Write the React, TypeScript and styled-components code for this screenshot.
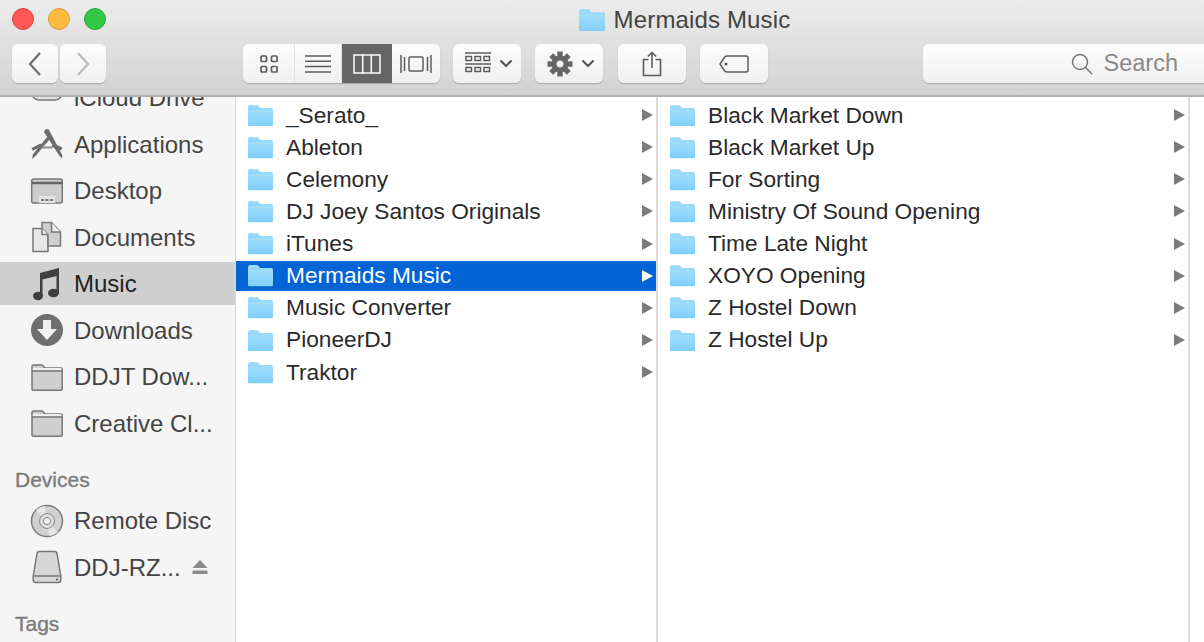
import React from "react";
import styled, { createGlobalStyle } from "styled-components";

const GlobalStyle = createGlobalStyle`
	html, body {
		margin: 0;
		padding: 0;
		background: #fff;
		overflow: hidden;
	}
	body {
		font-family: "Liberation Sans", Arial, sans-serif;
	}
`;

const FolderIcon = ({ size = 27 }: { size?: number }) => (
	<svg width={size} height={size * 0.85} viewBox="0 0 27 23">
		<defs>
			<linearGradient id="blueBack" x1="0" y1="0" x2="0" y2="1">
				<stop offset="0" stopColor="#a2dcfb" />
				<stop offset="1" stopColor="#6cc2f2" />
			</linearGradient>
			<linearGradient id="blueFront" x1="0" y1="0" x2="0" y2="1">
				<stop offset="0" stopColor="#a0dffd" />
				<stop offset="1" stopColor="#7fcff9" />
			</linearGradient>
		</defs>
		<path d="M1 3.500C1 2 1.800 1 3 1h6.500c1 0 1.600.4 2.200 1.200L13 4h11.500C25.600 4 26 4.800 26 6v14.500c0 1-.6 1.500-1.500 1.500h-22C1.600 22 1 21.500 1 20.500z" fill="url(#blueBack)" />
		<path d="M1 7.500C1 6.600 1.600 6 2.500 6h22c.9 0 1.500.6 1.500 1.500v13.500c0 .7-.6 1.200-1.500 1.200h-22C1.600 22.200 1 21.700 1 21z" fill="url(#blueFront)" />
	</svg>
);

const GreyFolder = () => (
	<svg width="34" height="30" viewBox="0 0 34 30">
		<path d="M2 4.500C2 3.500 2.600 3 3.500 3h8c.8 0 1.300.3 1.800 1l1.500 2H31c.7 0 1.200.5 1.200 1.200V27c0 .8-.5 1.300-1.200 1.300H3.200C2.500 28.300 2 27.800 2 27z" fill="#cfcfcf" stroke="#777" strokeWidth="1.500" />
		<path d="M2 9h30" stroke="#777" strokeWidth="1.500" />
		<path d="M2.800 7h28.600" stroke="#eee" strokeWidth="2" />
	</svg>
);

const AppsIcon = () => (
	<svg width="34" height="32" viewBox="0 0 34 32">
		<path d="M15 1.500l3.500-.5L32 26.500l.5 4-3-2.500L14 4z" fill="#6c6c6c" />
		<path d="M17.500 8.500l2 3L5.500 28 2 31l.8-4.500z" fill="#6c6c6c" />
		<path d="M1.500 20l9-4.500 1.500 2.800-9 4.500zM23 15.500l9.500 4-1.500 3-9.500-4z" fill="#6c6c6c" />
		<path d="M11.500 19.500h11" stroke="#8c8c8c" strokeWidth="2" />
	</svg>
);

const DesktopIcon = () => (
	<svg width="34" height="28" viewBox="0 0 34 28">
		<rect x="1.700" y="2" width="30.600" height="24" rx="2" fill="#cdcdcd" stroke="#777" strokeWidth="1.500" />
		<path d="M2 6h30" stroke="#666" strokeWidth="2.500" />
		<path d="M9 19h16v7H9z" fill="#e4e4e4" />
		<path d="M11 22h3v2h-3zM15.500 22h3v2h-3zM20 22h3v2h-3z" fill="#777" />
	</svg>
);

const DocumentsIcon = () => (
	<svg width="32" height="32" viewBox="0 0 32 32">
		<path d="M2 7.500h9l6 6v17H2z" fill="#e6e6e6" stroke="#777" strokeWidth="1.500" />
		<path d="M11 1.500h9.500l9 9.500v14H17V13.500l-6-6z" fill="#cfcfcf" stroke="#777" strokeWidth="1.500" />
		<path d="M20.500 1.500V11h9" fill="#eee" stroke="#777" strokeWidth="1.500" />
		<path d="M11 7.500v6h6" fill="#f2f2f2" stroke="#777" strokeWidth="1.500" />
	</svg>
);

const MusicIcon = () => (
	<svg width="30" height="34" viewBox="0 0 30 34">
		<path d="M8 6L27 1v25h-2.500V9L10.500 12.500V29H8z" fill="#3f3f3f" />
		<ellipse cx="6" cy="29" rx="5" ry="4.200" fill="#3f3f3f" />
		<ellipse cx="21.500" cy="26" rx="5.500" ry="4.200" fill="#3f3f3f" />
	</svg>
);

const DownloadsIcon = () => (
	<svg width="34" height="34" viewBox="0 0 34 34">
		<circle cx="17" cy="17" r="16" fill="#6f6f6f" />
		<path d="M13 7h8v9h6L17 27 7 16h6z" fill="#f1f1f1" />
	</svg>
);

const DiscIcon = () => (
	<svg width="34" height="34" viewBox="0 0 34 34">
		<circle cx="17" cy="17" r="15.500" fill="#d0d0d0" stroke="#7c7c7c" strokeWidth="1.500" />
		<path d="M17 17L6 6a15.500 15.500 0 0 1 9-4zM17 17l11 11a15.500 15.500 0 0 1-9 4z" fill="#e6e6e6" />
		<circle cx="17" cy="17" r="7.500" fill="#dedede" stroke="#8a8a8a" />
		<circle cx="17" cy="17" r="3.500" fill="#f5f5f5" stroke="#808080" />
	</svg>
);

const DriveIcon = () => (
	<svg width="30" height="34" viewBox="0 0 30 34">
		<path d="M5 3.500C5.200 2 6.200 1.500 7.500 1.500h15c1.300 0 2.300.5 2.500 2L28.800 26v4c0 1.500-1 2.500-2.500 2.500H3.700c-1.500 0-2.500-1-2.500-2.500v-4z" fill="#d6d6d6" stroke="#777" strokeWidth="1.500" />
		<path d="M1.500 26h27" stroke="#777" strokeWidth="1.500" />
		<circle cx="25" cy="29.500" r="1" fill="#555" />
	</svg>
);

const EjectIcon = () => (
	<svg width="16" height="16" viewBox="0 0 16 16">
		<path d="M8 1l7.500 8H.5z" fill="#8a8a8a" />
		<path d="M.5 11.500h15V15H.5z" fill="#8a8a8a" />
	</svg>
);

const IconCloud = () => (
	<svg width="34" height="32" viewBox="0 0 34 32">
		<rect x="2" y="-8" width="30" height="26" rx="7" fill="#e2e2e2" stroke="#777" strokeWidth="1.500" />
	</svg>
);

const BackIcon = ({ faded }: { faded?: boolean }) => (
	<svg width="14" height="26" viewBox="0 0 14 26">
		<path d={faded ? "M2 2l10 11L2 24" : "M12 2L2 13l10 11"} fill="none" stroke={faded ? "#b9b9b9" : "#6d6d6d"} strokeWidth="2.200" />
	</svg>
);

const GridIcon = () => (
	<svg width="18" height="18" viewBox="0 0 18 18" fill="none" stroke="#5c5c5c" strokeWidth="1.700">
		<rect x="1" y="1" width="5.500" height="5.500" rx="1" />
		<rect x="11.500" y="1" width="5.500" height="5.500" rx="1" />
		<rect x="1" y="11.500" width="5.500" height="5.500" rx="1" />
		<rect x="11.500" y="11.500" width="5.500" height="5.500" rx="1" />
	</svg>
);

const ListIcon = () => (
	<svg width="26" height="20" viewBox="0 0 26 20" stroke="#5c5c5c" strokeWidth="1.500">
		<path d="M0 2h26M0 7.300h26M0 12.600h26M0 18h26" />
	</svg>
);

const ColumnsIcon = () => (
	<svg width="28" height="20" viewBox="0 0 28 20" fill="none" stroke="#fff" strokeWidth="1.500">
		<rect x="1" y="1" width="26" height="18" fill="#666" />
		<path d="M9.700 1v18M18.300 1v18" strokeWidth="1.500" />
	</svg>
);

const CoverIcon = () => (
	<svg width="32" height="20" viewBox="0 0 32 20" fill="none" stroke="#5c5c5c" strokeWidth="1.500">
		<rect x="9" y="3" width="14" height="14" rx="1" />
		<path d="M1 1v18M4.500 3v14M27.500 3v14M31 1v18" />
	</svg>
);

const ArrangeIcon = () => (
	<svg width="26" height="24" viewBox="0 0 26 24" fill="none" stroke="#5c5c5c" strokeWidth="1.500">
		<path d="M0 1h26M0 12h26" />
		<rect x="1" y="4.500" width="5.500" height="4" />
		<rect x="10" y="4.500" width="5.500" height="4" />
		<rect x="19" y="4.500" width="5.500" height="4" />
		<rect x="1" y="15.500" width="5.500" height="4" />
		<rect x="10" y="15.500" width="5.500" height="4" />
		<rect x="19" y="15.500" width="5.500" height="4" />
	</svg>
);

const Chevron = () => (
	<svg width="14" height="9" viewBox="0 0 14 9">
		<path d="M1.500 1.500L7 7l5.500-5.500" fill="none" stroke="#555" strokeWidth="2.200" />
	</svg>
);

const GearIcon = () => (
	<svg width="26" height="26" viewBox="0 0 26 26">
		<g fill="#666">
			{[0, 45, 90, 135, 180, 225, 270, 315].map((angle) => (
				<rect key={angle} x="10.300" y="0.500" width="5.400" height="6" transform={`rotate(${angle} 13 13)`} />
			))}
		</g>
		<circle cx="13" cy="13" r="8.500" fill="#666" />
		<circle cx="13" cy="13" r="3.500" fill="#f2f2f2" />
	</svg>
);

const ShareIcon = () => (
	<svg width="20" height="26" viewBox="0 0 20 26" fill="none" stroke="#5c5c5c" strokeWidth="1.600">
		<path d="M6.500 8.500H1.500v16h17v-16h-5" />
		<path d="M10 17V1.500M5.800 5.500L10 1.500l4.200 4" />
	</svg>
);

const TagIcon = () => (
	<svg width="30" height="18" viewBox="0 0 30 18" fill="none" stroke="#5c5c5c" strokeWidth="1.500">
		<path d="M8 1h19c1.200 0 2 .8 2 2v12c0 1.200-.8 2-2 2H8c-1 0-1.600-.3-2.300-1L1 9l4.700-7C6.400 1.300 7 1 8 1z" />
		<circle cx="7" cy="9" r=".8" fill="#5c5c5c" />
	</svg>
);

const SearchIcon = () => (
	<svg width="22" height="22" viewBox="0 0 22 22" fill="none" stroke="#777" strokeWidth="1.500">
		<circle cx="9" cy="9" r="7.500" />
		<path d="M14.500 14.500L21 21" />
	</svg>
);

type Place = { label: string; icon: React.ReactNode; active?: boolean; eject?: boolean };

const favourites: Place[] = [
	{ label: "iCloud Drive", icon: <IconCloud /> },
	{ label: "Applications", icon: <AppsIcon /> },
	{ label: "Desktop", icon: <DesktopIcon /> },
	{ label: "Documents", icon: <DocumentsIcon /> },
	{ label: "Music", icon: <MusicIcon />, active: true },
	{ label: "Downloads", icon: <DownloadsIcon /> },
	{ label: "DDJT Dow...", icon: <GreyFolder /> },
	{ label: "Creative Cl...", icon: <GreyFolder /> },
];

const devices: Place[] = [
	{ label: "Remote Disc", icon: <DiscIcon /> },
	{ label: "DDJ-RZ...", icon: <DriveIcon />, eject: true },
];

const rootFolders = ["_Serato_", "Ableton", "Celemony", "DJ Joey Santos Originals", "iTunes", "Mermaids Music", "Music Converter", "PioneerDJ", "Traktor"];
const subFolders = ["Black Market Down", "Black Market Up", "For Sorting", "Ministry Of Sound Opening", "Time Late Night", "XOYO Opening", "Z Hostel Down", "Z Hostel Up"];

const PlaceList = ({ items }: { items: Place[] }) => (
	<>
		{items.map((item) => (
			<PlaceRow key={item.label} $active={item.active}>
				<PlaceIcon>{item.icon}</PlaceIcon>
				<PlaceLabel $active={item.active}>{item.label}</PlaceLabel>
				{item.eject && <EjectSlot><EjectIcon /></EjectSlot>}
			</PlaceRow>
		))}
	</>
);

const FolderColumn = ({ names, selected, wide }: { names: string[]; selected?: string; wide?: boolean }) => (
	<Column $wide={wide}>
		{names.map((name) => (
			<FolderRow key={name} $selected={name === selected}>
				<FolderIcon />
				<FolderName>{name}</FolderName>
				<Arrow $selected={name === selected} />
			</FolderRow>
		))}
	</Column>
);

export default function App() {
	return (
		<Window>
			<GlobalStyle />
			<Header>
				<TitleBar>
					<Lights>
						<Light $color="#fc5753" $edge="#df4744" />
						<Light $color="#fdbc40" $edge="#de9f34" />
						<Light $color="#33c748" $edge="#27aa35" />
					</Lights>
					<Title>
						<FolderIcon size={28} />
						<span>Mermaids Music</span>
					</Title>
				</TitleBar>
				<Toolbar>
					<NavGroup>
						<NavButton><BackIcon /></NavButton>
						<NavButton><BackIcon faded /></NavButton>
					</NavGroup>
					<Segments>
						<Segment $width={52}><GridIcon /></Segment>
						<Segment $width={47}><ListIcon /></Segment>
						<Segment $width={50} $on><ColumnsIcon /></Segment>
						<Segment $width={48}><CoverIcon /></Segment>
					</Segments>
					<MenuButton><ArrangeIcon /><Chevron /></MenuButton>
					<MenuButton><GearIcon /><Chevron /></MenuButton>
					<ToolButton><ShareIcon /></ToolButton>
					<ToolButton><TagIcon /></ToolButton>
					<SearchBox>
						<SearchIcon />
						<span>Search</span>
					</SearchBox>
				</Toolbar>
			</Header>
			<Body>
				<Sidebar>
					<PlaceList items={favourites} />
					<SectionHeading>Devices</SectionHeading>
					<PlaceList items={devices} />
					<TagsHeading>Tags</TagsHeading>
				</Sidebar>
				<FolderColumn names={rootFolders} selected="Mermaids Music" />
				<FolderColumn names={subFolders} wide />
			</Body>
		</Window>
	);
}

const Window = styled.div`
	width: 1204px;
	height: 642px;
	display: flex;
	flex-direction: column;
	overflow: hidden;
	background: #fff;
`;

const Header = styled.header`
	height: 97px;
	flex: none;
	box-sizing: border-box;
	border-bottom: 2px solid #aeaeae;
	background: linear-gradient(#ececec, #d2d2d2);
`;

const TitleBar = styled.div`
	position: relative;
	height: 40px;
	display: flex;
	align-items: center;
	justify-content: center;
`;

const Lights = styled.div`
	position: absolute;
	left: 12px;
	top: 8px;
	display: flex;
	gap: 14px;
`;

const Light = styled.span<{ $color: string; $edge: string }>`
	width: 22px;
	height: 22px;
	border-radius: 50%;
	box-sizing: border-box;
	background: ${(p) => p.$color};
	border: 1px solid ${(p) => p.$edge};
`;

const Title = styled.div`
	display: flex;
	align-items: center;
	gap: 8px;
	margin-left: 164px;
	color: #434343;
	font-size: 24px;
	letter-spacing: 0.15px;
`;

const Toolbar = styled.div`
	display: flex;
	align-items: flex-start;
	padding: 4px 0 0 12px;
`;

const NavGroup = styled.div`
	display: flex;
	gap: 2px;
	margin-right: 137px;
`;

const buttonFace = `
	height: 39px;
	box-sizing: border-box;
	display: flex;
	align-items: center;
	justify-content: center;
	background: linear-gradient(#fcfcfc, #f0f0f0);
	border-radius: 6px;
	box-shadow: 0 1px 1px rgba(0, 0, 0, 0.22);
`;

const NavButton = styled.div`
	${buttonFace}
	width: 46px;
`;

const Segments = styled.div`
	${buttonFace}
	overflow: hidden;
	margin-right: 13px;
`;

const Segment = styled.div<{ $on?: boolean; $width: number }>`
	width: ${(p) => p.$width}px;
	box-sizing: border-box;
	height: 100%;
	display: flex;
	align-items: center;
	justify-content: center;
	background: ${(p) => (p.$on ? "#666" : "transparent")};
	border-right: ${(p) => (p.$on ? "0" : "1px solid #e2e2e2")};

	&:last-child {
		border-right: 0;
	}
`;

const ToolButton = styled.div`
	${buttonFace}
	width: 68px;
	margin-right: 14.3px;
`;

const MenuButton = styled(ToolButton)`
	gap: 8px;
	padding-left: 3px;
`;

const SearchBox = styled.div`
	${buttonFace}
	flex: 1;
	margin-left: 141px;
	justify-content: flex-end;
	gap: 11px;
	padding-right: 26px;
	border-radius: 6px 0 0 6px;
	color: #8a8a8a;
	font-size: 23.5px;
`;

const Body = styled.main`
	flex: 1;
	min-height: 0;
	display: flex;
`;

const Sidebar = styled.aside`
	width: 236px;
	flex: none;
	box-sizing: border-box;
	border-right: 1px solid #d8d8d8;
	background: #f5f5f5;
	overflow: hidden;
	padding-top: 1px;

	& > div:first-child {
		margin-top: -22px;
	}
`;

const PlaceRow = styled.div<{ $active?: boolean }>`
	height: 43px;
	margin-bottom: 3.5px;
	display: flex;
	align-items: center;
	padding-left: 30px;
	background: ${(p) => (p.$active ? "#cfcfcf" : "transparent")};
`;

const PlaceIcon = styled.span`
	width: 34px;
	flex: none;
	display: flex;
	justify-content: center;
	margin-right: 10px;
`;

const PlaceLabel = styled.span<{ $active?: boolean }>`
	flex: 1;
	padding-top: 1px;
	white-space: nowrap;
	color: ${(p) => (p.$active ? "#232323" : "#444")};
	font-size: 24px;
`;

const EjectSlot = styled.span`
	display: flex;
	margin-right: 27px;
`;

const SectionHeading = styled.h2`
	margin: 0;
	padding: 20px 0 0 15px;
	height: 51px;
	box-sizing: border-box;
	color: #7d7d7d;
	font-size: 21px;
	font-weight: 400;
	line-height: 24px;
	-webkit-text-stroke: 0.4px #7d7d7d;
`;

const TagsHeading = styled(SectionHeading)`
	padding-top: 20px;
`;

const Column = styled.section<{ $wide?: boolean }>`
	width: ${(p) => (p.$wide ? "532px" : "422px")};
	flex: none;
	box-sizing: border-box;
	border-right: 2px solid #dcdcdc;
	padding-top: 3px;
`;

const FolderRow = styled.div<{ $selected?: boolean }>`
	height: 30px;
	margin-bottom: 2.15px;
	display: flex;
	align-items: center;
	padding: 0 3px 0 11px;
	background: ${(p) => (p.$selected ? "#0364d6" : "transparent")};
	color: ${(p) => (p.$selected ? "#fff" : "#2a2a2a")};
`;

const FolderName = styled.span`
	flex: 1;
	margin-left: 12px;
	font-size: 22.7px;
	white-space: nowrap;
`;

const Arrow = styled.span<{ $selected?: boolean }>`
	width: 0;
	height: 0;
	border-style: solid;
	border-width: 6.5px 0 6.5px 11px;
	border-color: transparent transparent transparent ${(p) => (p.$selected ? "#fff" : "#7b7b7b")};
`;
